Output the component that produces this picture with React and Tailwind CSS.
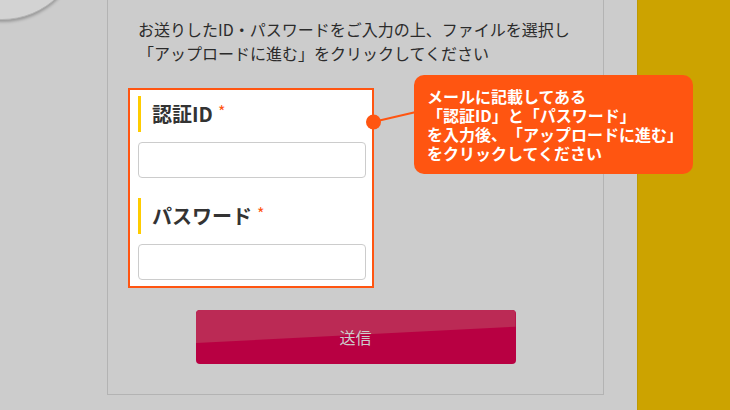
export default function App() {
  const font = { fontFamily: '"Noto Sans CJK JP", "Noto Sans", sans-serif' };
  return (
    <div
      className="relative w-[730px] h-[410px] overflow-hidden bg-[#cccccc] flex [text-spacing-trim:space-all]"
      style={font}
    >
      {/* top-left circle */}
      <div className="absolute left-[-78px] top-[-140px] w-[160px] h-[160px] rounded-full bg-[#d3d3d3] border border-[#b5b5b5] shadow-[0_2px_3px_rgba(0,0,0,0.25)]" />

      <div className="w-[107px] shrink-0" />

      {/* panel */}
      <div className="w-[497px] h-[395px] shrink-0 border-x border-b border-[#b3b3b3] flex flex-col">
        <div className="pl-[30px] pt-[17px] text-[16px] leading-[24px] text-[#2b2b2b]">
          <p>お送りしたID・パスワードをご入力の上、ファイルを選択し</p>
          <p>「アップロードに進む」をクリックしてください</p>
        </div>

        <div className="ml-[20px] mt-[23px] w-[246px] h-[200px] border-2 border-[#ff5511] bg-white pl-[8px] pr-[6px] pt-[6px] flex flex-col">
          <div className="flex items-center h-[36px] border-l-[3px] border-[#ffcc00] pl-[11px]">
            <span className="text-[20px] font-bold text-[#333]">認証ID</span>
            <span className="ml-[5px] -mt-[6px] text-[16px] leading-none text-[#ff5511]">*</span>
          </div>
          <div className="mt-[10px] h-[36px] rounded-[4px] border border-[#cccccc] bg-white" />
          <div className="mt-[20px] flex items-center h-[36px] border-l-[3px] border-[#ffcc00] pl-[11px]">
            <span className="text-[20px] font-bold text-[#333]">パスワード</span>
            <span className="ml-[5px] -mt-[6px] text-[16px] leading-none text-[#ff5511]">*</span>
          </div>
          <div className="mt-[10px] h-[36px] rounded-[4px] border border-[#cccccc] bg-white" />
        </div>

        <div className="mt-[22px] self-center relative w-[320px] h-[54px] rounded-[4px] bg-[#b80042] overflow-hidden flex items-center justify-center">
          <div className="absolute inset-0 bg-[#bb2a55] [clip-path:polygon(0_0,100%_0,100%_31%,0_61%)]" />
          <span className="relative text-[16px] text-[#cccccc]">送信</span>
        </div>
      </div>

      <div className="w-[33px] shrink-0" />
      <div className="flex-1 bg-[#cca300] border-l border-[#bf9900]" />

      {/* connector */}
      <svg className="absolute left-0 top-0" width="730" height="410">
        <line x1="373" y1="122" x2="416" y2="112" stroke="#ff5511" strokeWidth="2" />
        <circle cx="373.5" cy="122" r="7.5" fill="#ff5511" />
      </svg>

      {/* callout */}
      <div className="absolute left-[414px] top-[75px] w-[279px] h-[99px] rounded-[10px] bg-[#ff5511] pl-[13px] pt-[12px] text-white font-bold text-[16px] leading-[19px]">
        <p>メールに記載してある</p>
        <p>「認証ID」と「パスワード」</p>
        <p>を入力後、「アップロードに進む」</p>
        <p>をクリックしてください</p>
      </div>
    </div>
  );
}
